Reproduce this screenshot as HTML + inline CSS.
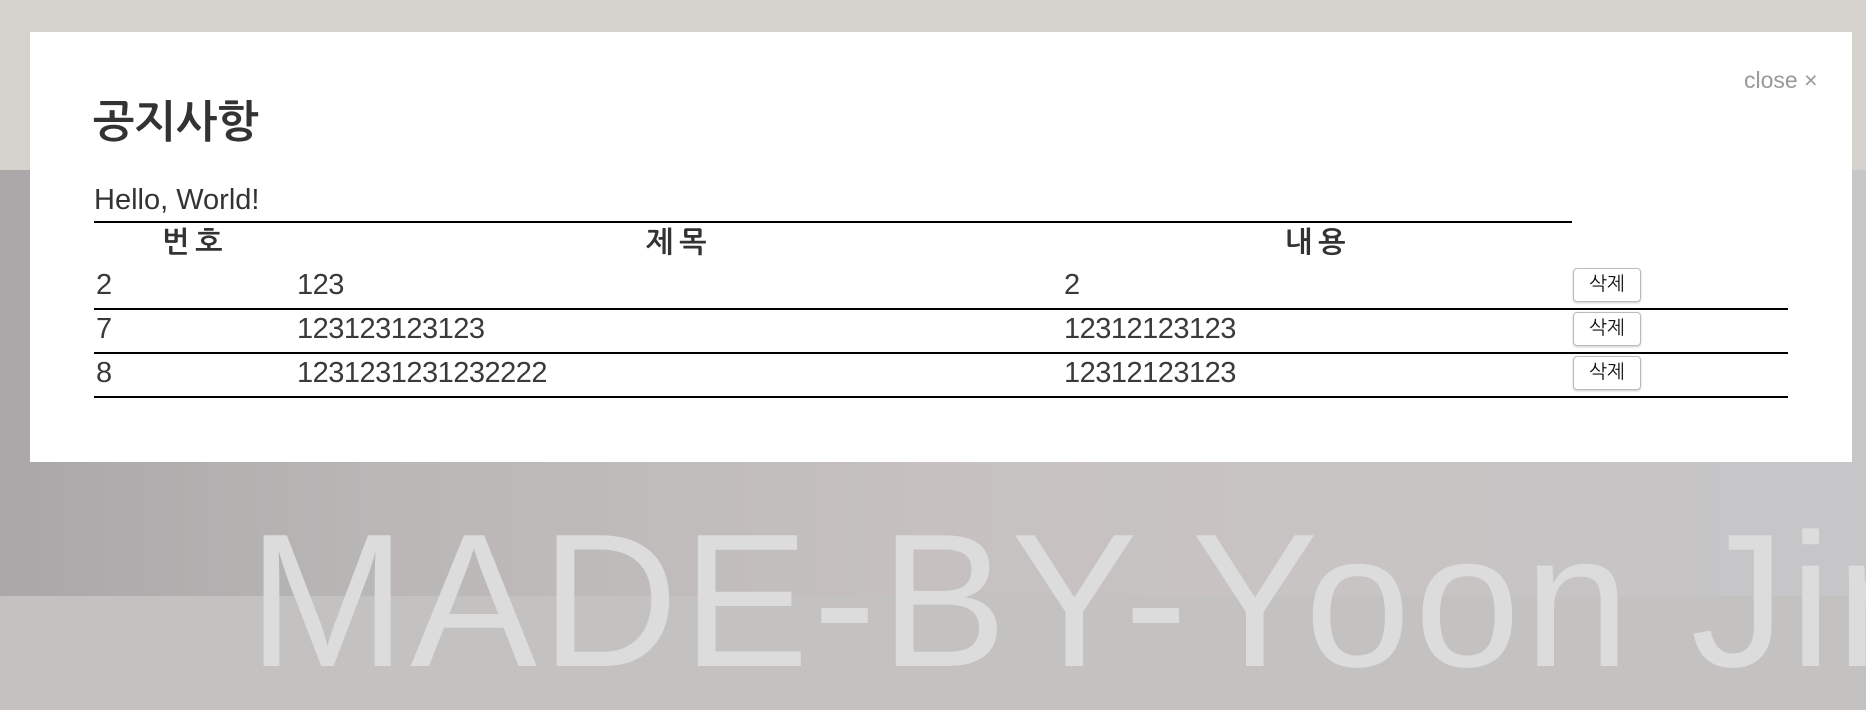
<!DOCTYPE html>
<html style="background:#c4c1c1"><head><meta charset="utf-8"><style>
body{margin:0;width:1866px;height:596px;overflow:hidden;position:relative;font-family:"Liberation Sans","NanumGothic","Noto Sans CJK KR",sans-serif;}
.top{position:absolute;left:0;top:0;width:1866px;height:170px;background:#d5d2cd}
.bg{position:absolute;left:0;top:170px;width:1866px;height:426px;background:linear-gradient(90deg,#a9a7a7 0%,#b9b6b6 20%,#c6c1c0 50%,#c8c4c3 70%,#c6c5c8 100%)}
.big{position:absolute;left:248px;top:492px;font-size:190px;color:#dcdcdc;letter-spacing:4px;white-space:nowrap;font-weight:300}
.modal{position:absolute;left:30px;top:32px;width:1822px;height:430px;background:#fff}
.a{position:absolute;white-space:nowrap;color:#333}
.line{position:absolute;height:2px;background:#000}
.btn{position:absolute;left:1573px;width:66px;height:32px;border:1px solid #bbb;border-radius:4px;background:#fff;box-shadow:0 1px 2px rgba(0,0,0,.2);font-size:19px;text-align:center;line-height:32px;color:#111}
.d{font-size:29px;color:#3a3a3a;letter-spacing:-0.5px}
</style></head><body>
<div class="top"></div><div class="bg"></div>
<div class="big">MADE-BY-Yoon Jin</div>
<div class="modal"></div>
<div class="a" style="left:1744px;top:67px;font-size:23px;color:#999">close ×</div>
<div class="a" style="left:93px;top:98px;font-size:44px;font-weight:bold">공지사항</div>
<div class="a" style="left:94px;top:184px;font-size:29px">Hello, World!</div>
<div class="line" style="left:94px;top:221px;width:1478px"></div>
<div class="a" style="left:162px;top:227px;font-size:29px;font-weight:bold;letter-spacing:6px">번호</div>
<div class="a" style="left:646px;top:227px;font-size:29px;font-weight:bold;letter-spacing:6px">제목</div>
<div class="a" style="left:1285px;top:227px;font-size:29px;font-weight:bold;letter-spacing:6px">내용</div>
<div class="a d" style="left:96px;top:269px">2</div>
<div class="a d" style="left:297px;top:269px">123</div>
<div class="a d" style="left:1064px;top:269px">2</div>
<div class="btn" style="top:268px">삭제</div>
<div class="line" style="left:94px;top:308px;width:1694px"></div>
<div class="a d" style="left:96px;top:313px">7</div>
<div class="a d" style="left:297px;top:313px">123123123123</div>
<div class="a d" style="left:1064px;top:313px">12312123123</div>
<div class="btn" style="top:312px">삭제</div>
<div class="line" style="left:94px;top:352px;width:1694px"></div>
<div class="a d" style="left:96px;top:357px">8</div>
<div class="a d" style="left:297px;top:357px">1231231231232222</div>
<div class="a d" style="left:1064px;top:357px">12312123123</div>
<div class="btn" style="top:356px">삭제</div>
<div class="line" style="left:94px;top:396px;width:1694px"></div>
</body></html>
